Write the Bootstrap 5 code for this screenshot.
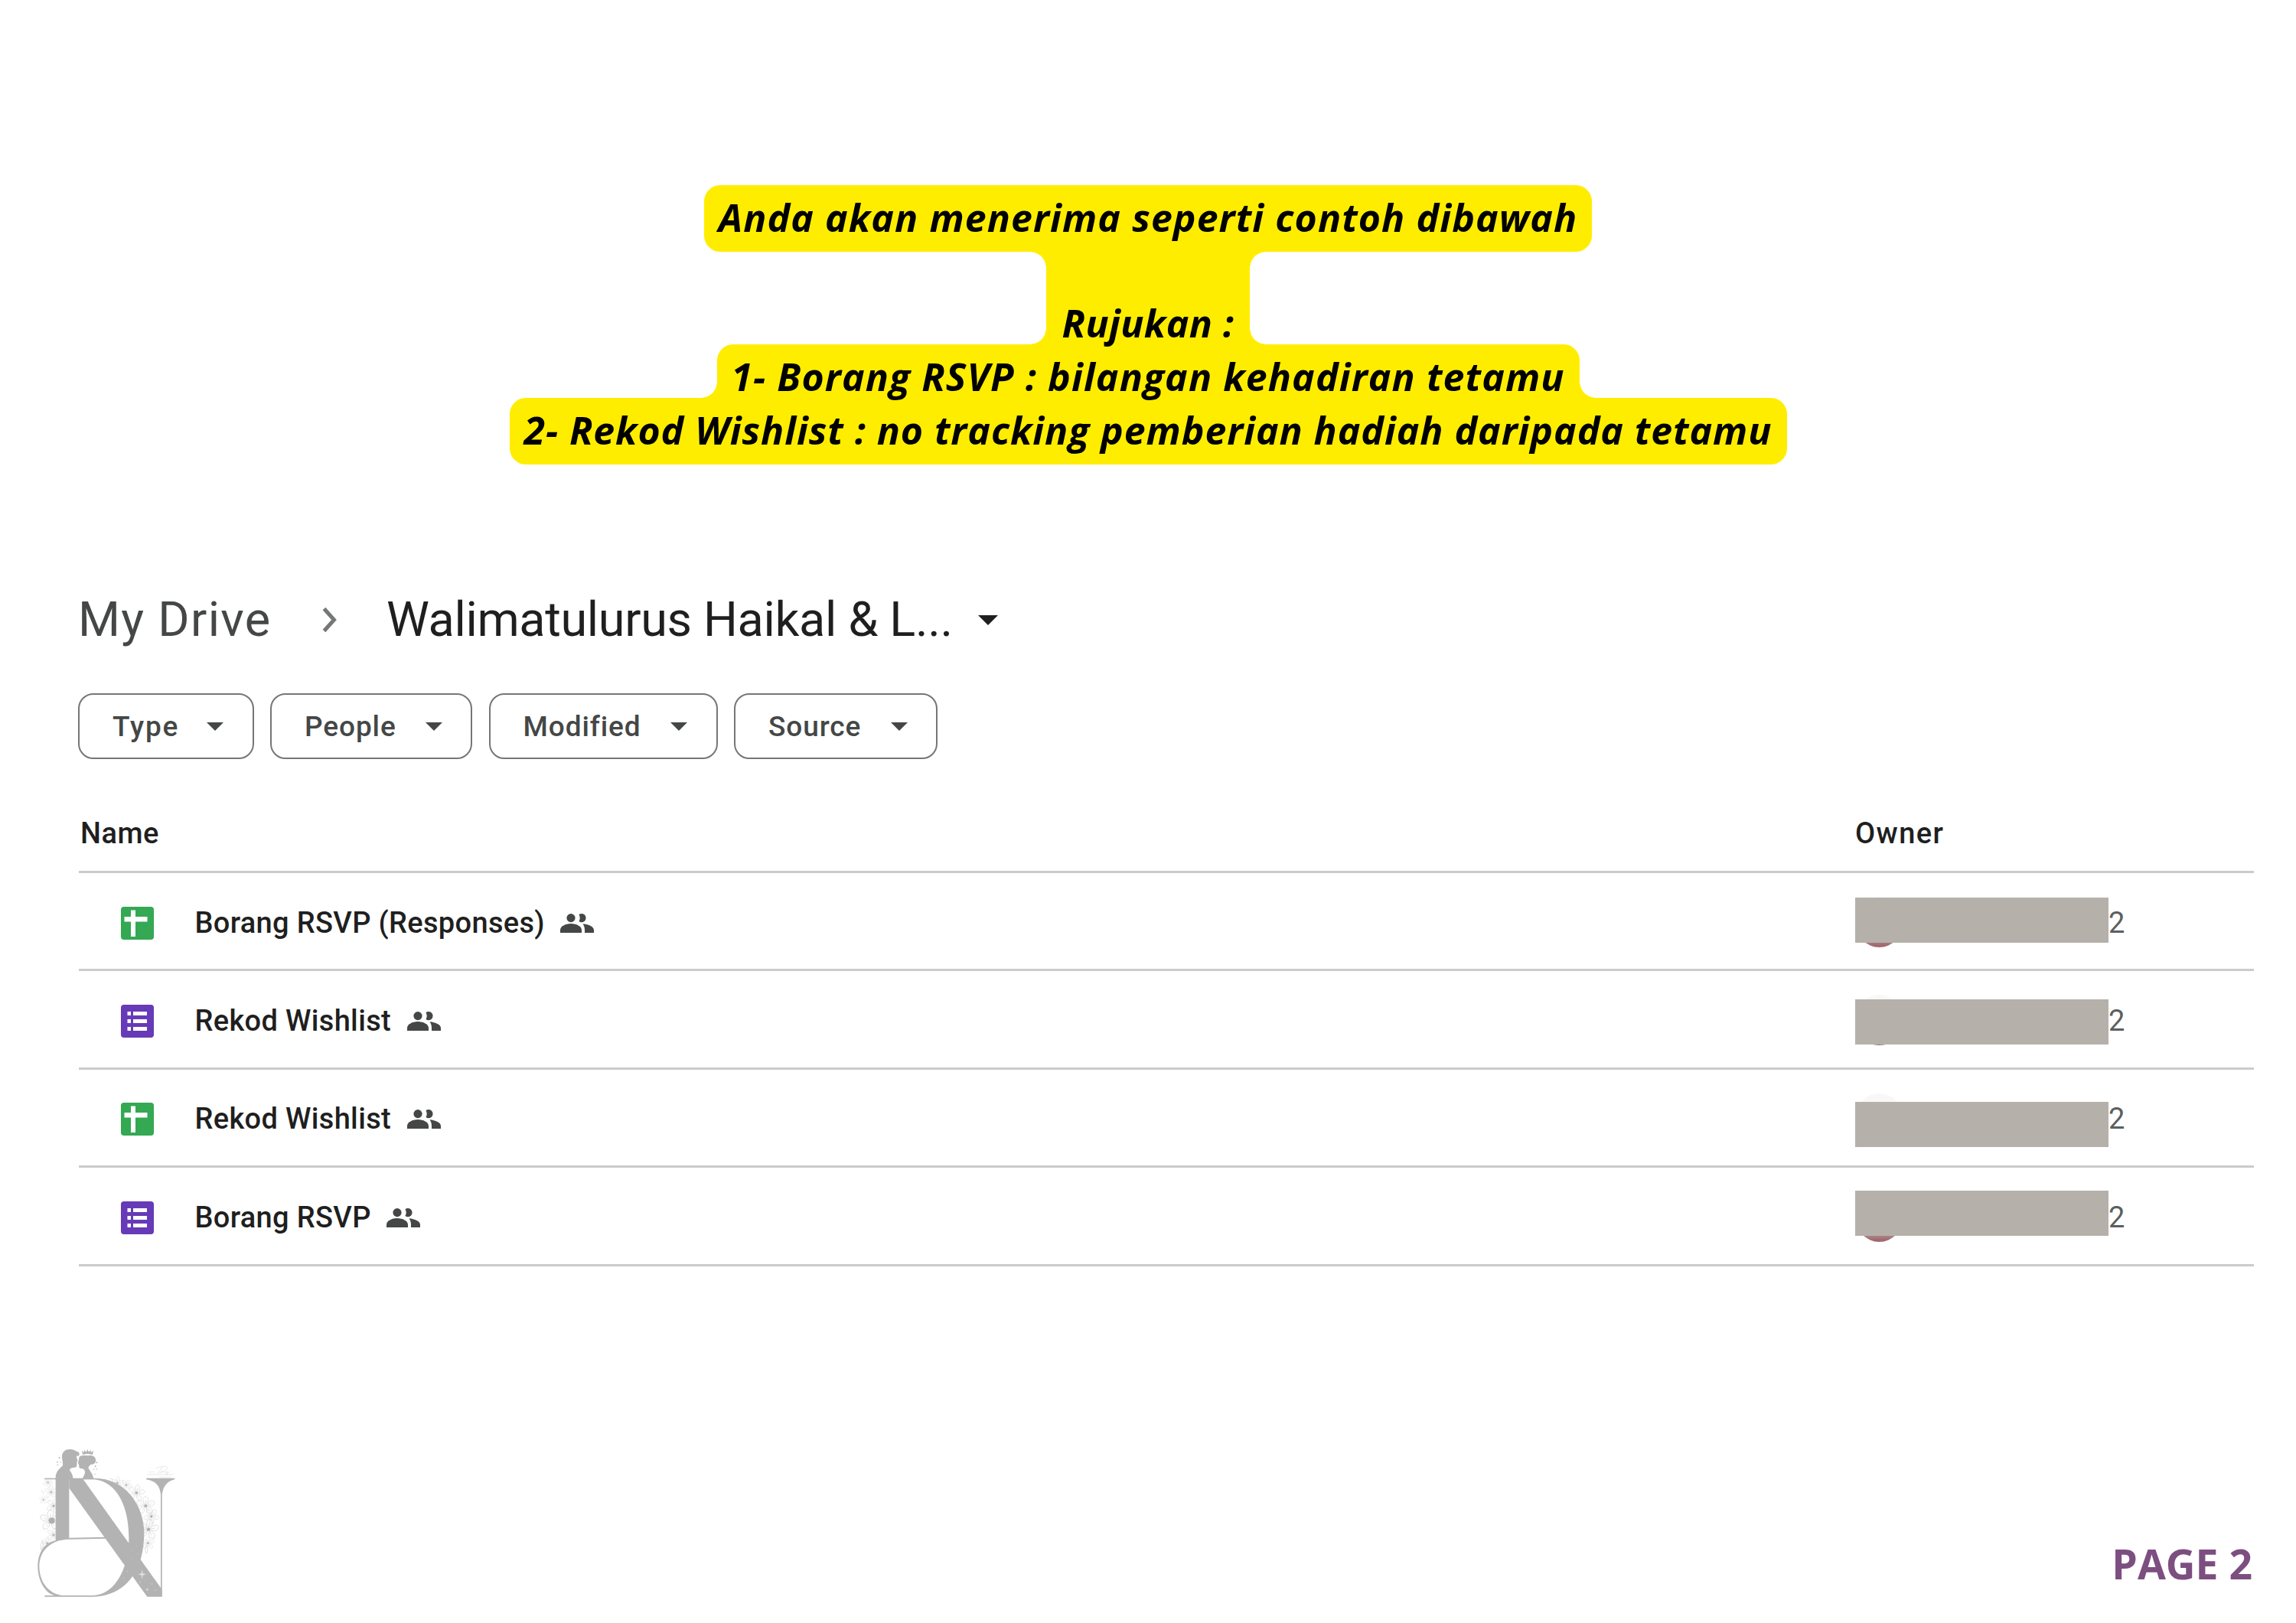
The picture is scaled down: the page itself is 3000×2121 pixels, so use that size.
<!DOCTYPE html>
<html lang="ms">
<head>
<meta charset="utf-8">
<meta name="viewport" content="width=device-width, initial-scale=1">
<title>Page 2</title>
<link href="https://cdn.jsdelivr.net/npm/bootstrap@5.3.0/dist/css/bootstrap.min.css" rel="stylesheet">
<style>
body{background:#fff;color:#1f1f1f;font-family:Roboto,"Liberation Sans",sans-serif}
.sheet-page{width:3000px;height:2121px;overflow:hidden}
.note{padding-top:242px;font:italic 700 50px/70px "Open Sans","Noto Sans",sans-serif;color:#000}
.note-line{background:#ffed00;position:relative;white-space:nowrap}
.note-line span{position:relative;z-index:2}
.n1{width:1160px;height:87px;border-radius:21px;padding-bottom:4px;letter-spacing:1.08px}
.n2{width:266px;height:121px;line-height:55px;letter-spacing:.4px}
.n3{width:1127px;height:70px;border-radius:21px 21px 0 0;padding-top:13px;letter-spacing:1.1px}
.n4{width:1669px;height:87px;border-radius:21px;padding-bottom:4px;letter-spacing:.92px}
.notch{position:absolute;width:21px;height:21px}
.notch-tl{top:0;left:-21px;background:radial-gradient(circle at 0 100%,transparent 20.5px,#ffed00 21px)}
.notch-tr{top:0;right:-21px;background:radial-gradient(circle at 100% 100%,transparent 20.5px,#ffed00 21px)}
.notch-bl{bottom:0;left:-21px;background:radial-gradient(circle at 0 0,transparent 20.5px,#ffed00 21px)}
.notch-br{bottom:0;right:-21px;background:radial-gradient(circle at 100% 0,transparent 20.5px,#ffed00 21px)}
.drive{padding:165px 55px 0 102px}
.crumbs{height:76px;font-size:63px;line-height:76px;white-space:nowrap}
.crumb-root{width:319px;color:#444746;letter-spacing:1.3px}
.crumb-now{margin-left:64px;width:773px;letter-spacing:-.35px}
.chips{gap:21.5px;margin-top:58px}
.chip{height:86px;border:2.7px solid #747775;border-radius:20px;padding:1px 37.5px 0 43px;font-size:37px;font-weight:500;color:#444746;background:#fff;letter-spacing:.9px}
.chip-type{width:229.5px;letter-spacing:1.8px}
.chip-people{width:264px}
.chip-modified{width:299px}
.chip-source{width:266px}
.list-head{height:149px;padding:72px 0 0 2px;border-bottom:3px solid #cbcbcb;font-size:38px;line-height:50px;font-weight:500;letter-spacing:.5px;margin-left:1px}
.list-line{height:128.4px;border-bottom:3px solid #cbcbcb;font-size:38px;font-weight:500;letter-spacing:.33px;padding:5px 0 0 55px;margin-left:1px;white-space:nowrap}
.file-name{margin-left:53.5px;margin-right:20.5px}
.owner-col{width:521px}
.owner-head{letter-spacing:1.4px}
.owner-cell{font-weight:400;color:#5c5f5e;position:relative}
.avatar{position:absolute;left:0;top:26px;width:63px;height:66px;border-radius:50%;background:linear-gradient(#f8f8f8 25%,#b5b0aa 26% 75%,#a2696f 96%)}
.redact{position:absolute;left:0;width:330.5px;height:59px;background:#b5b0aa}
.redact-1{top:26.5px}.redact-2{top:31.3px}.redact-3{top:37.2px}.redact-4{top:25px}
.owner-tail{padding-left:331px}
.page-foot{padding:215.4px 57px 0 30px}
.page-no{margin-top:138px;font:700 53.5px/72px "Open Sans","Noto Sans",sans-serif;color:#7c4f80}
</style>
</head>
<body>
<svg class="d-none">
<symbol id="caret" viewBox="0 0 22 11"><path d="M0 0h22L11 11z" fill="currentColor"/></symbol>
<symbol id="sheet" viewBox="0 0 43 43"><rect width="43" height="43" rx="4" fill="#34a853"/><path d="M13 4.500h6V13h15.500v6.500H19V39h-6V19.500H4.500V13H13z" fill="#fff"/></symbol>
<symbol id="form" viewBox="0 0 43 43"><rect width="43" height="43" rx="4" fill="#673ab7"/><path d="M8.500 9H13v5H8.500zM16 9h18v5H16zM8.500 19H13v5H8.500zM16 19h18v5H16zM8.500 29H13v5H8.500zM16 29h18v5H16z" fill="#fff"/></symbol>
<symbol id="people" viewBox="0 0 44 25"><g fill="#444746"><circle cx="14" cy="5.600" r="5.600"/><path d="M0 25v-3.500C0 16.500 7 13 14 13s14 3.500 14 8.500V25z"/><path d="M24.500 10A9 9 0 0 0 24.500 1.200 5.600 5.600 0 1 1 24.500 10z"/><path d="M29.500 13.300C37 14 44 17 44 21.500V25H32v-3.500c0-3.500-1-6-2.500-8.200z"/></g></symbol>
</svg>
<main class="sheet-page">
<section class="note d-flex flex-column align-items-center">
<div class="note-line n1 d-flex align-items-center justify-content-center"><span>Anda akan menerima seperti contoh dibawah</span></div>
<div class="note-line n2 d-flex align-items-end justify-content-center"><i class="notch notch-tl"></i><i class="notch notch-tr"></i><i class="notch notch-bl"></i><i class="notch notch-br"></i><span>Rujukan :</span></div>
<div class="note-line n3 d-flex align-items-center justify-content-center"><i class="notch notch-bl"></i><i class="notch notch-br"></i><span>1- Borang RSVP : bilangan kehadiran tetamu</span></div>
<div class="note-line n4 d-flex align-items-center justify-content-center"><span>2- Rekod Wishlist : no tracking pemberian hadiah daripada tetamu</span></div>
</section>

<section class="drive">
<nav class="crumbs d-flex align-items-center">
<div class="crumb-root">My Drive</div>
<svg width="20" height="34" viewBox="0 0 20 34" fill="none" stroke="#747775" stroke-width="5"><path d="M2.500 2.500l13 14.500-13 14.500"/></svg>
<div class="crumb-now">Walimatulurus Haikal &amp; L...</div>
<svg width="26" height="13"><use href="#caret"/></svg>
</nav>
<div class="chips d-flex">
<button class="chip chip-type d-flex align-items-center justify-content-between">Type<svg width="22" height="11"><use href="#caret"/></svg></button>
<button class="chip chip-people d-flex align-items-center justify-content-between">People<svg width="22" height="11"><use href="#caret"/></svg></button>
<button class="chip chip-modified d-flex align-items-center justify-content-between">Modified<svg width="22" height="11"><use href="#caret"/></svg></button>
<button class="chip chip-source d-flex align-items-center justify-content-between">Source<svg width="22" height="11"><use href="#caret"/></svg></button>
</div>

<div class="list-head d-flex justify-content-between"><div>Name</div><div class="owner-col owner-head">Owner</div></div>

<div class="list-line d-flex align-items-center">
<svg width="43" height="43"><use href="#sheet"/></svg><span class="file-name">Borang RSVP (Responses)</span><svg width="44" height="25"><use href="#people"/></svg>
<div class="owner-col owner-cell ms-auto d-flex align-items-center align-self-stretch"><div class="avatar"></div><div class="redact redact-1"></div><span class="owner-tail">2</span></div>
</div>
<div class="list-line d-flex align-items-center">
<svg width="43" height="43"><use href="#form"/></svg><span class="file-name">Rekod Wishlist</span><svg width="44" height="25"><use href="#people"/></svg>
<div class="owner-col owner-cell ms-auto d-flex align-items-center align-self-stretch"><div class="avatar"></div><div class="redact redact-2"></div><span class="owner-tail">2</span></div>
</div>
<div class="list-line d-flex align-items-center">
<svg width="43" height="43"><use href="#sheet"/></svg><span class="file-name">Rekod Wishlist</span><svg width="44" height="25"><use href="#people"/></svg>
<div class="owner-col owner-cell ms-auto d-flex align-items-center align-self-stretch"><div class="avatar"></div><div class="redact redact-3"></div><span class="owner-tail">2</span></div>
</div>
<div class="list-line d-flex align-items-center">
<svg width="43" height="43"><use href="#form"/></svg><span class="file-name">Borang RSVP</span><svg width="44" height="25"><use href="#people"/></svg>
<div class="owner-col owner-cell ms-auto d-flex align-items-center align-self-stretch"><div class="avatar"></div><div class="redact redact-4"></div><span class="owner-tail">2</span></div>
</div>
</section>

<footer class="page-foot d-flex justify-content-between align-items-start">
<svg width="220" height="240" viewBox="0 0 660 720">
<defs>
<g id="bloom" fill="none" stroke="#d2d2d2" stroke-width="1.800">
<path d="M0-5C-14-16-11-30 0-34 11-30 14-16 0-5zM5-2C10-18 24-22 32-14 32-2 20 6 5-2zM4 4C20 4 28 16 22 26 10 28 0 20 4 4zM-4 4C0 20-10 28-22 26-28 16-20 4-4 4zM-5-2C-20 6-32-2-32-14-24-22-10-18-5-2z"/>
<path d="M0-8v-14M8-3l12-5M5 7l8 10M-5 7l-8 10M-8-3l-12-5"/>
<circle r="5.500" fill="#b0b0b0" stroke="none"/>
</g>
</defs>
<!-- flowers -->
<use href="#bloom" transform="translate(108 352) scale(1.250)"/>
<circle cx="113" cy="352" r="12" fill="#b0b0b0"/>
<use href="#bloom" transform="translate(120 294) rotate(20) scale(.85)"/>
<use href="#bloom" transform="translate(110 240) scale(.75)"/>
<use href="#bloom" transform="translate(98 202) rotate(30) scale(.6)"/>
<use href="#bloom" transform="translate(120 408) rotate(15) scale(.8)"/>
<use href="#bloom" transform="translate(95 440) scale(.7)"/>
<use href="#bloom" transform="translate(80 270) scale(.5)"/>
<use href="#bloom" transform="translate(370 204) rotate(10) scale(.7)"/>
<use href="#bloom" transform="translate(405 212) rotate(30) scale(.65)"/>
<use href="#bloom" transform="translate(445 243) rotate(12) scale(.95)"/>
<use href="#bloom" transform="translate(481 294) scale(1.100)"/>
<use href="#bloom" transform="translate(503 335) rotate(35) scale(.9)"/>
<use href="#bloom" transform="translate(492 386) rotate(10) scale(1.200)"/>
<use href="#bloom" transform="translate(490 440) scale(.75)"/>
<path d="M484 480q-10-16 0-32 10 14 0 32zM72 466q-8-20 6-34 6 16-6 34zM72 232l10 14M340 184l14 10" fill="none" stroke="#d0d0d0" stroke-width="2"/>
<!-- monogram -->
<path d="M181 190h89c80 0 145 80 145 230L300 600H165C110 645 64 600 64 530c0-60 46-107 117-108z" fill="#fff"/>
<g fill="#b3b3b3">
<path fill-rule="evenodd" d="M85 185h195C400 185 475 290 475 400 475 550 400 650 270 650H85v-5h40C90 638 58 590 58 530 58 465 95 436 128 430V190H85zM181 190v229l145-3v6l-145 3C110 425 64 470 64 530 64 600 110 645 165 645H270C360 645 415 540 415 420 415 270 350 190 270 190z"/>
<path d="M181 187h53L545 622v28h-58L181 224z"/>
<path d="M483 185h112v5c-26 6-44 22-50 58v400h-5V248c-4-36-22-52-57-58z"/>
<!-- groom -->
<path d="M128 192C127 165 135 155 156 136 158 122 152 112 153 96 155 82 168 71 184 72 197 71 204 78 218 83 222 86 222 94 218 98L211 97C209 104 212 110 215 117L211 121C212 128 212 136 209 142 201 146 194 142 187 147 181 151 183 154 187 160 193 168 196 178 197 190z"/>
<!-- bride -->
<path d="M232 190C236 179 243 172 243 162 243 156 241 151 236 149 231 147 225 149 221 145L219 132 215 124C220 118 218 108 221 101 227 95 244 95 256 97 270 93 284 100 285 112 287 123 280 132 270 131 263 131 260 137 256 144 262 160 275 166 277 190z"/>
<path d="M235 93l-5-15 9 6 2-9 7 8 5-11 5 11 7-8 2 9 10-6-5 16c-12-5-24-5-37-1z"/>
<g><circle cx="143" cy="105" r="3"/><circle cx="135" cy="122" r="2.500"/><circle cx="147" cy="122" r="2"/><circle cx="136" cy="133" r="2.500"/><circle cx="289" cy="124" r="3"/><circle cx="284" cy="139" r="3"/><circle cx="289" cy="150" r="2"/><circle cx="278" cy="150" r="2"/><circle cx="282" cy="170" r="2"/></g>
</g>
<!-- sparkle -->
<g fill="#e4dada"><circle cx="487" cy="622" r="4"/><circle cx="460" cy="594" r="2"/><circle cx="505" cy="600" r="2"/><circle cx="425" cy="500" r="1.500"/><circle cx="445" cy="450" r="1.500"/><circle cx="430" cy="470" r="1.500"/><circle cx="410" cy="550" r="1.500"/><circle cx="450" cy="480" r="1.500"/><circle cx="395" cy="577" r="1.500"/><circle cx="520" cy="625" r="2"/><path d="M467 542l3 16 13 4-13 4-3 16-3-16-13-4 13-4z"/></g>
<!-- signature flourish -->
<path d="M486 171h104M535 181h45" stroke="#dcdcdc" stroke-width="2"/>
<path d="M492 161q4-4 6 0t6 0 6 0 6-1M526 168q12-10 20-28-20 2-26 8M546 140q16-4 20 4-2 12-30 20 14-8 18-2 4 4 10-4 4 6-2 16 6-16 14-12" fill="none" stroke="#dadada" stroke-width="1.800"/>
</svg>
<div class="page-no">PAGE 2</div>
</footer>
</main>
<script src="https://cdn.jsdelivr.net/npm/bootstrap@5.3.0/dist/js/bootstrap.bundle.min.js"></script>
</body>
</html>
